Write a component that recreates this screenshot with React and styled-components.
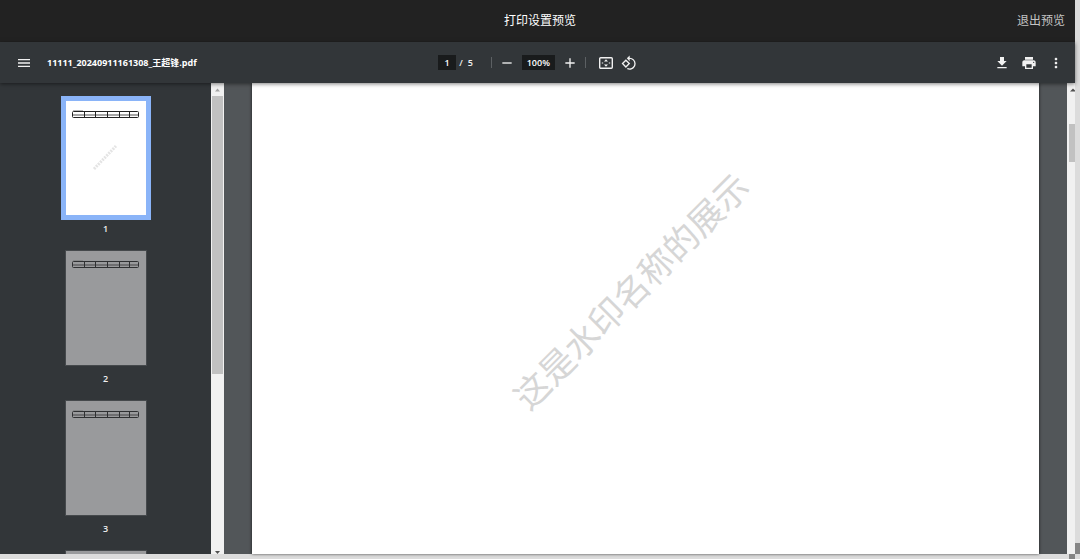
import React from "react";
import styled, { createGlobalStyle } from "styled-components";
import {
  MdAdd,
  MdFileDownload,
  MdMenu,
  MdMoreVert,
  MdPrint,
  MdRemove,
  MdRotate90DegreesCcw,
} from "react-icons/md";

const GlobalStyle = createGlobalStyle`
  * {
    box-sizing: border-box;
  }
  body {
    margin: 0;
    overflow: hidden;
    background: #525659;
    font-family: "Open Sans", "Noto Sans CJK SC", sans-serif;
  }
`;

const Viewport = styled.div`
  display: grid;
  grid-template-columns: minmax(0, 1fr) 5px;
  grid-template-rows: minmax(0, 1fr) 5px;
  height: 100vh;
`;

const Screen = styled.div`
  display: flex;
  flex-direction: column;
  min-height: 0;
`;

const Header = styled.header`
  display: grid;
  grid-template-columns: 1fr auto 1fr;
  align-items: center;
  height: 42px;
  padding: 0 10px 0 15px;
  background: #222222;
  color: #ffffff;
`;

const Title = styled.h1`
  grid-column: 2;
  margin: 0;
  font-size: 12px;
  font-weight: 400;
  line-height: 18px;
`;

const ExitButton = styled.button`
  justify-self: end;
  padding: 0;
  border: none;
  background: none;
  color: #c4c4c4;
  font-family: inherit;
  font-size: 12px;
  line-height: 18px;
  cursor: pointer;
`;

const Toolbar = styled.div`
  position: relative;
  z-index: 1;
  display: grid;
  grid-template-columns: 1fr auto 1fr;
  align-items: center;
  height: 41px;
  padding: 0 11px;
  background: #323639;
  color: #f1f1f1;
  font-size: 10px;
  box-shadow: 0 1px 4px rgba(0, 0, 0, 0.5);
`;

const ToolGroup = styled.div`
  display: flex;
  align-items: center;
  justify-content: ${(props) => props.$justify || "flex-start"};
  gap: ${(props) => props.$gap || 0}px;
  padding-left: ${(props) => props.$indent || 0}px;
`;

const FileName = styled.span`
  color: #ffffff;
  font-size: 9px;
  font-weight: 700;
  line-height: 16px;
  white-space: nowrap;
`;

const IconButton = styled.button`
  display: flex;
  padding: 0;
  border: none;
  background: none;
  color: inherit;
  font-size: 16px;
  cursor: pointer;
`;

const ToolInput = styled.input`
  width: ${(props) => props.$width}px;
  height: 15px;
  padding: 0;
  border: none;
  background: #191b1c;
  color: #ffffff;
  font-family: inherit;
  font-size: 9px;
  font-weight: 600;
  line-height: 15px;
  text-align: center;
`;

const PageTotal = styled.span`
  display: flex;
  gap: 5px;
  padding: 0 18px 0 3px;
  font-size: 9px;
  font-weight: 600;
  line-height: 16px;
`;

const Divider = styled.span`
  width: 1px;
  height: 11px;
  margin-right: ${(props) => props.$after}px;
  background: #5c6063;
`;

const Content = styled.div`
  display: flex;
  flex: 1;
  min-height: 0;
`;

const Sidebar = styled.nav`
  flex: none;
  width: 211px;
  padding-top: 18px;
  overflow: hidden;
  background: #323639;
`;

const ThumbButton = styled.button`
  display: flex;
  flex-direction: column;
  align-items: center;
  gap: 6px;
  width: 100%;
  height: 150px;
  padding: 0;
  border: none;
  background: none;
  color: #f1f1f1;
  font-family: inherit;
  font-size: 9px;
  font-weight: 600;
  line-height: 16px;
  cursor: pointer;
`;

const ThumbPage = styled.span`
  display: block;
  width: 80px;
  height: 114px;
  background: ${(props) => (props.$active ? "#ffffff" : "#999a9c")};
  box-shadow: ${(props) =>
    props.$active ? "0 0 0 5px #8ab4f8" : "0 0 0 1px #45494c"};
`;

const Scrollbar = styled.div`
  display: flex;
  flex-direction: column;
  flex: none;
  align-items: center;
  width: ${(props) => props.$width}px;
  background: #f1f1f1;
`;

const ScrollArrow = styled.svg`
  flex: none;
  width: 100%;
  height: 13px;
`;

const ScrollThumb = styled.div`
  align-self: flex-end;
  width: ${(props) => props.$width}px;
  height: ${(props) => props.$size};
  margin-top: ${(props) => props.$offset || "0"};
  margin-right: ${(props) => props.$edge || 0}px;
  background: #c1c1c1;
`;

const Spacer = styled.div`
  flex: 1;
`;

const Document = styled.main`
  flex: 1;
  min-width: 0;
  padding: 0 28px;
  background: #525659;
`;

const Page = styled.div`
  position: relative;
  height: 100%;
  overflow: hidden;
  background: #ffffff;
  box-shadow: 0 0 3px rgba(0, 0, 0, 0.7);
`;

const Watermark = styled.span`
  position: absolute;
  top: 44%;
  left: 48%;
  color: #d6d6d6;
  font-family: "Noto Sans CJK SC", sans-serif;
  font-size: 35px;
  line-height: 50px;
  white-space: nowrap;
  transform: translate(-50%, -50%) rotate(-45deg);
`;

const OuterBar = styled.div`
  background: #dcdcdc;
`;

const OuterBarRight = styled(OuterBar)`
  display: flex;
  flex-direction: column;
  justify-content: flex-end;
`;

const OuterBarBottom = styled(OuterBar)`
  display: flex;
  justify-content: flex-end;
`;

const BarEnd = styled.span`
  width: ${(props) => props.$width}px;
  height: ${(props) => props.$height}px;
  background: #858585;
`;

const FitPageIcon = () => (
  <svg width="16" height="16" viewBox="0 0 16 16" aria-hidden="true">
    <rect
      x="1.7"
      y="2.7"
      width="12.6"
      height="10.6"
      rx="1"
      fill="none"
      stroke="currentColor"
      strokeWidth="1.4"
    />
    <path
      d="M8 4.2L10 6.6H6zM8 11.8L6 9.4h4zM3.8 7.4h1.4v1.2H3.8zM10.8 7.4h1.4v1.2h-1.4z"
      fill="currentColor"
    />
  </svg>
);

// header row and one data row, drawn at thumbnail scale
const ThumbTable = ({ faded, watermark }) => (
  <svg width="80" height="114" viewBox="0 0 80 114" aria-hidden="true">
    <path d="M7 9.5h10" stroke="#777777" strokeWidth="1" opacity="0.5" />
    <g stroke={faded ? "#2f3032" : "#222222"} fill="none">
      <rect x="6.5" y="10.5" width="66" height="6" rx="1" />
      <path d="M6 14h67" opacity="0.8" />
      <path d="M18.5 10v7M29.5 10v7M41.5 10v7M53.5 10v7M63.5 10v7" />
    </g>
    {watermark && (
      <path
        d="M28 68L50 45"
        stroke="#e4e4e4"
        strokeWidth="3"
        strokeDasharray="2 1"
      />
    )}
  </svg>
);

const pages = [1, 2, 3];

const App = () => {
  return (
    <Viewport>
      <GlobalStyle />
      <Screen>
        <Header>
          <Title>打印设置预览</Title>
          <ExitButton type="button">退出预览</ExitButton>
        </Header>
        <Toolbar>
          <ToolGroup $gap={15} $indent={5}>
            <IconButton type="button" aria-label="菜单">
              <MdMenu />
            </IconButton>
            <FileName>11111_20240911161308_王超锋.pdf</FileName>
          </ToolGroup>
          <ToolGroup>
            <ToolInput $width={18} defaultValue="1" aria-label="页码" />
            <PageTotal>
              <span>/</span>
              <span>5</span>
            </PageTotal>
            <Divider $after={7} />
            <ToolGroup $gap={7}>
              <IconButton type="button" aria-label="缩小">
                <MdRemove />
              </IconButton>
              <ToolInput $width={33} defaultValue="100%" aria-label="缩放" />
              <IconButton type="button" aria-label="放大">
                <MdAdd />
              </IconButton>
              <Divider $after={5} />
              <IconButton type="button" aria-label="适合页面">
                <FitPageIcon />
              </IconButton>
              <IconButton type="button" aria-label="逆时针旋转">
                <MdRotate90DegreesCcw />
              </IconButton>
            </ToolGroup>
          </ToolGroup>
          <ToolGroup $justify="flex-end" $gap={11}>
            <IconButton type="button" aria-label="下载">
              <MdFileDownload />
            </IconButton>
            <IconButton type="button" aria-label="打印">
              <MdPrint />
            </IconButton>
            <IconButton type="button" aria-label="更多">
              <MdMoreVert />
            </IconButton>
          </ToolGroup>
        </Toolbar>
        <Content>
          <Sidebar>
            {pages.map((page) => (
              <ThumbButton type="button" key={page}>
                <ThumbPage $active={page === 1}>
                  <ThumbTable faded={page !== 1} watermark={page === 1} />
                </ThumbPage>
                {page}
              </ThumbButton>
            ))}
            <ThumbButton type="button" aria-label="4">
              <ThumbPage />
            </ThumbButton>
          </Sidebar>
          <Scrollbar $width={13} aria-hidden="true">
            <ScrollArrow viewBox="0 0 13 13">
              <path d="M4 8.5L6.5 5.5L9 8.5z" fill="#a3a3a3" />
            </ScrollArrow>
            <ScrollThumb $width={11} $size="59%" $edge={1} />
            <Spacer />
            <ScrollArrow viewBox="0 0 13 13">
              <path d="M4 10L6.5 13L9 10z" fill="#505050" />
            </ScrollArrow>
          </Scrollbar>
          <Document>
            <Page>
              <Watermark>这是水印名称的展示</Watermark>
            </Page>
          </Document>
          <Scrollbar $width={8} aria-hidden="true">
            <ScrollArrow viewBox="0 0 8 13">
              <path d="M3 8.5L6 5.5L8 7.5V8.5z" fill="#505050" />
            </ScrollArrow>
            <ScrollThumb $width={6} $size="8%" $offset="28px" />
          </Scrollbar>
        </Content>
      </Screen>
      <OuterBarRight>
        <BarEnd $width={5} $height={11} />
      </OuterBarRight>
      <OuterBarBottom>
        <BarEnd $width={6} $height={5} />
      </OuterBarBottom>
      <OuterBar />
    </Viewport>
  );
};

export default App;
